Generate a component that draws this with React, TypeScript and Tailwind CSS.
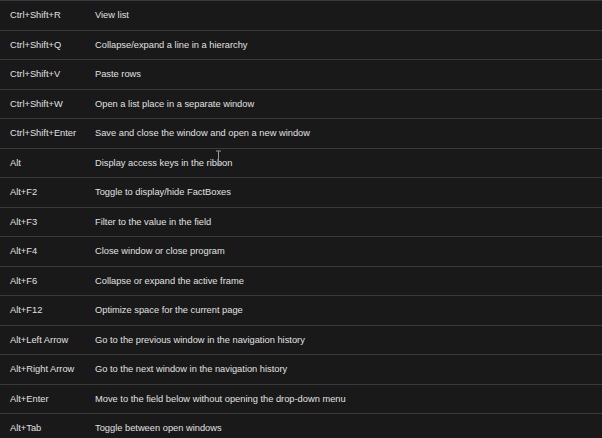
import React from "react";

const rows: [string, string][] = [
  ["Ctrl+Shift+R", "View list"],
  ["Ctrl+Shift+Q", "Collapse/expand a line in a hierarchy"],
  ["Ctrl+Shift+V", "Paste rows"],
  ["Ctrl+Shift+W", "Open a list place in a separate window"],
  ["Ctrl+Shift+Enter", "Save and close the window and open a new window"],
  ["Alt", "Display access keys in the ribbon"],
  ["Alt+F2", "Toggle to display/hide FactBoxes"],
  ["Alt+F3", "Filter to the value in the field"],
  ["Alt+F4", "Close window or close program"],
  ["Alt+F6", "Collapse or expand the active frame"],
  ["Alt+F12", "Optimize space for the current page"],
  ["Alt+Left Arrow", "Go to the previous window in the navigation history"],
  ["Alt+Right Arrow", "Go to the next window in the navigation history"],
  ["Alt+Enter", "Move to the field below without opening the drop-down menu"],
  ["Alt+Tab", "Toggle between open windows"],
];

export default function App() {
  return (
    <div
      className="relative w-[602px] h-[438px] overflow-hidden bg-[#191919] text-[#e0e0e0] text-[9.3px]"
      style={{ fontFamily: '"Liberation Sans", Arial, sans-serif' }}
    >
      <div className="h-px bg-[#3a3a3a]" />
      {rows.map(([k, d], i) => (
        <div
          key={i}
          className="flex items-center pt-[2px] h-[29.5px] border-b border-[#3a3a3a]"
        >
          <div className="w-[95px] pl-[10px] shrink-0">{k}</div>
          <div>{d}</div>
        </div>
      ))}
      <svg
        className="absolute left-[214px] top-[150px]"
        width="9"
        height="15"
        viewBox="0 0 9 15"
      >
        <path
          d="M2 1 H7 M4.5 1 V14 M2 14 H7"
          stroke="#9a9a9a"
          strokeWidth="1"
          fill="none"
        />
      </svg>
    </div>
  );
}
